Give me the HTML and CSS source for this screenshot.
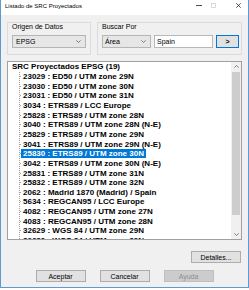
FILE: index.html
```html
<!DOCTYPE html>
<html lang="es">
<head>
    <meta charset="UTF-8">
    <title>Listado de SRC Proyectados</title>
    <link rel="stylesheet" href="styles.css">
</head>
<body>
    <div class="window">
        <div class="titlebar">
            <span class="title">Listado de SRC Proyectados</span>
            <div class="controls">
                <span class="ctl"><svg width="6" height="5" viewBox="0 0 6 5"><line x1="0" y1="2.5" x2="6" y2="2.5" stroke="#222" stroke-width="0.8"/></svg></span>
                <span class="ctl"><svg width="5" height="5" viewBox="0 0 5 5"><rect x="0.5" y="0.5" width="4" height="4" fill="none" stroke="#d0d0d0" stroke-width="0.8"/></svg></span>
                <span class="ctl ctl-close"><svg width="5" height="5" viewBox="0 0 5 5"><path d="M0.3 0.3 L4.7 4.7 M4.7 0.3 L0.3 4.7" stroke="#222" stroke-width="0.8"/></svg></span>
            </div>
        </div>

        <div class="client">
            <div class="groups">
                <div class="group group-origen">
                    <div class="group-label">Origen de Datos</div>
                    <div class="group-row">
                        <div class="combo combo-origen">
                            <span>EPSG</span>
                            <svg class="chev" width="5" height="3" viewBox="0 0 5 3"><polyline points="0.4,0.4 2.5,2.5 4.6,0.4" fill="none" stroke="#606060" stroke-width="0.8"/></svg>
                        </div>
                    </div>
                </div>
                <div class="group group-buscar">
                    <div class="group-label">Buscar Por</div>
                    <div class="group-row">
                        <div class="combo combo-area">
                            <span>Área</span>
                            <svg class="chev" width="5" height="3" viewBox="0 0 5 3"><polyline points="0.4,0.4 2.5,2.5 4.6,0.4" fill="none" stroke="#606060" stroke-width="0.8"/></svg>
                        </div>
                        <div class="textbox">Spain</div>
                        <div class="btn btn-go">&gt;</div>
                    </div>
                </div>
            </div>

            <div class="tree">
                <div class="tree-body">
                    <div class="tree-root">SRC Proyectados EPSG (19)</div>
                    <ul class="tree-items">
                        <li><span>23029 : ED50 / UTM zone 29N</span></li>
                        <li><span>23030 : ED50 / UTM zone 30N</span></li>
                        <li><span>23031 : ED50 / UTM zone 31N</span></li>
                        <li><span>3034 : ETRS89 / LCC Europe</span></li>
                        <li><span>25828 : ETRS89 / UTM zone 28N</span></li>
                        <li><span>3040 : ETRS89 / UTM zone 28N (N-E)</span></li>
                        <li><span>25829 : ETRS89 / UTM zone 29N</span></li>
                        <li><span>3041 : ETRS89 / UTM zone 29N (N-E)</span></li>
                        <li><span class="selected">25830 : ETRS89 / UTM zone 30N</span></li>
                        <li><span>3042 : ETRS89 / UTM zone 30N (N-E)</span></li>
                        <li><span>25831 : ETRS89 / UTM zone 31N</span></li>
                        <li><span>25832 : ETRS89 / UTM zone 32N</span></li>
                        <li><span>2062 : Madrid 1870 (Madrid) / Spain</span></li>
                        <li><span>5634 : REGCAN95 / LCC Europe</span></li>
                        <li><span>4082 : REGCAN95 / UTM zone 27N</span></li>
                        <li><span>4083 : REGCAN95 / UTM zone 28N</span></li>
                        <li><span>32629 : WGS 84 / UTM zone 29N</span></li>
                        <li><span>32630 : WGS 84 / UTM zone 30N</span></li>
                    </ul>
                </div>
                <div class="scrollbar">
                    <div class="sb-arrow"><svg width="5" height="3" viewBox="0 0 5 3"><polyline points="0.4,2.6 2.5,0.5 4.6,2.6" fill="none" stroke="#606060" stroke-width="0.8"/></svg></div>
                    <div class="sb-track"><div class="sb-thumb"></div></div>
                    <div class="sb-arrow"><svg width="5" height="3" viewBox="0 0 5 3"><polyline points="0.4,0.4 2.5,2.5 4.6,0.4" fill="none" stroke="#606060" stroke-width="0.8"/></svg></div>
                </div>
            </div>

            <div class="details-row">
                <div class="btn btn-wide">Detalles...</div>
            </div>

            <div class="footer">
                <div class="btn btn-wide">Aceptar</div>
                <div class="btn btn-wide">Cancelar</div>
                <div class="btn btn-wide disabled">Ayuda</div>
            </div>
        </div>
    </div>
</body>
</html>
```

FILE: styles.css
```css
body {
    margin: 0;
    background: #fff;
    font-family: "Liberation Sans", Arial, sans-serif;
    color: #000;
}
.window {
    width: 249px;
    box-sizing: border-box;
    border: 1px solid #5b9bd5;
    border-top: 0;
    background: #f0f0f0;
}
.titlebar {
    height: 15px;
    background: #fff;
    display: flex;
    align-items: flex-start;
    padding: 0 2px 0 4px;
}
.title {
    font-size: 6px;
    line-height: 7px;
    margin-top: 3px;
}
.controls {
    margin-left: auto;
    display: flex;
    padding-top: 2.5px;
}
.ctl {
    width: 15px;
    height: 5px;
    display: flex;
    justify-content: center;
}
.ctl-close {
    width: 16px;
    margin-left: 9px;
}

.client {
    padding: 7px 6px 5px 6px;
}
.groups {
    display: flex;
    gap: 6px;
    height: 33px;
}
.group {
    box-sizing: border-box;
    border: 1px solid #dcdcdc;
    padding: 0 2px 0 4px;
}
.group-origen {
    width: 84px;
    padding-right: 4px;
}
.group-buscar {
    flex: 1;
}
.group-label {
    font-size: 7px;
    line-height: 8px;
}
.group-row {
    display: flex;
    align-items: center;
    margin-top: 4px;
    height: 13px;
}
.combo {
    height: 13px;
    box-sizing: border-box;
    border: 1px solid #b5b5b5;
    background: #e6e6e6;
    display: flex;
    align-items: center;
    padding: 0 4px 0 3px;
    font-size: 7px;
}
.combo .chev {
    margin-left: auto;
}
.combo-origen {
    flex: 1;
}
.combo-area {
    width: 49px;
    padding-left: 2px;
}
.textbox {
    flex: 1;
    margin-left: 3px;
    height: 13px;
    box-sizing: border-box;
    border: 1px solid #b8b8b8;
    background: #fff;
    font-size: 7px;
    padding-left: 2px;
    display: flex;
    align-items: center;
}
.btn {
    height: 12px;
    box-sizing: border-box;
    border: 1px solid #adadad;
    background: #e1e1e1;
    font-size: 7px;
    display: flex;
    align-items: center;
    justify-content: center;
}
.btn-go {
    width: 23px;
    height: 13px;
    margin-left: 3px;
    border-color: #0078d7;
    font-weight: bold;
}
.btn-wide {
    width: 50px;
}
.btn.disabled {
    background: #cccccc;
    border-color: #bfbfbf;
    color: #8c8c8c;
}

.tree {
    margin-top: 5.5px;
    height: 179.5px;
    box-sizing: border-box;
    border: 1px solid #a0a0a0;
    background: #fff;
    display: flex;
}
.tree-body {
    flex: 1;
    overflow: hidden;
    padding-top: 0.7px;
    font-size: 8px;
    font-weight: bold;
}
.tree-root {
    height: 9.65px;
    line-height: 9.65px;
    padding-left: 4px;
    white-space: nowrap;
}
.tree-items {
    list-style: none;
    margin: 0 0 0 11px;
    padding: 0;
    border-left: 1px dotted #a0a0a0;
}
.tree-items li {
    height: 9.65px;
    display: flex;
    align-items: center;
    white-space: nowrap;
}
.tree-items li::before {
    content: "";
    width: 1px;
    border-top: 1px dotted #a0a0a0;
}
.tree-items span {
    line-height: 9px;
    padding: 0 2px;
}
.tree-items .selected {
    background: #0078d7;
    color: #fff;
}
.scrollbar {
    width: 10px;
    display: flex;
    flex-direction: column;
    background: #f0f0f0;
}
.sb-arrow {
    height: 10px;
    display: flex;
    align-items: center;
    justify-content: center;
}
.sb-track {
    flex: 1;
}
.sb-thumb {
    height: 143.5px;
    margin: 0 1px;
    background: #cdcdcd;
}

.details-row {
    display: flex;
    justify-content: flex-end;
    margin-top: 11px;
    padding-right: 1px;
}
.footer {
    display: flex;
    justify-content: center;
    gap: 14px;
    margin-top: 7px;
}
```
